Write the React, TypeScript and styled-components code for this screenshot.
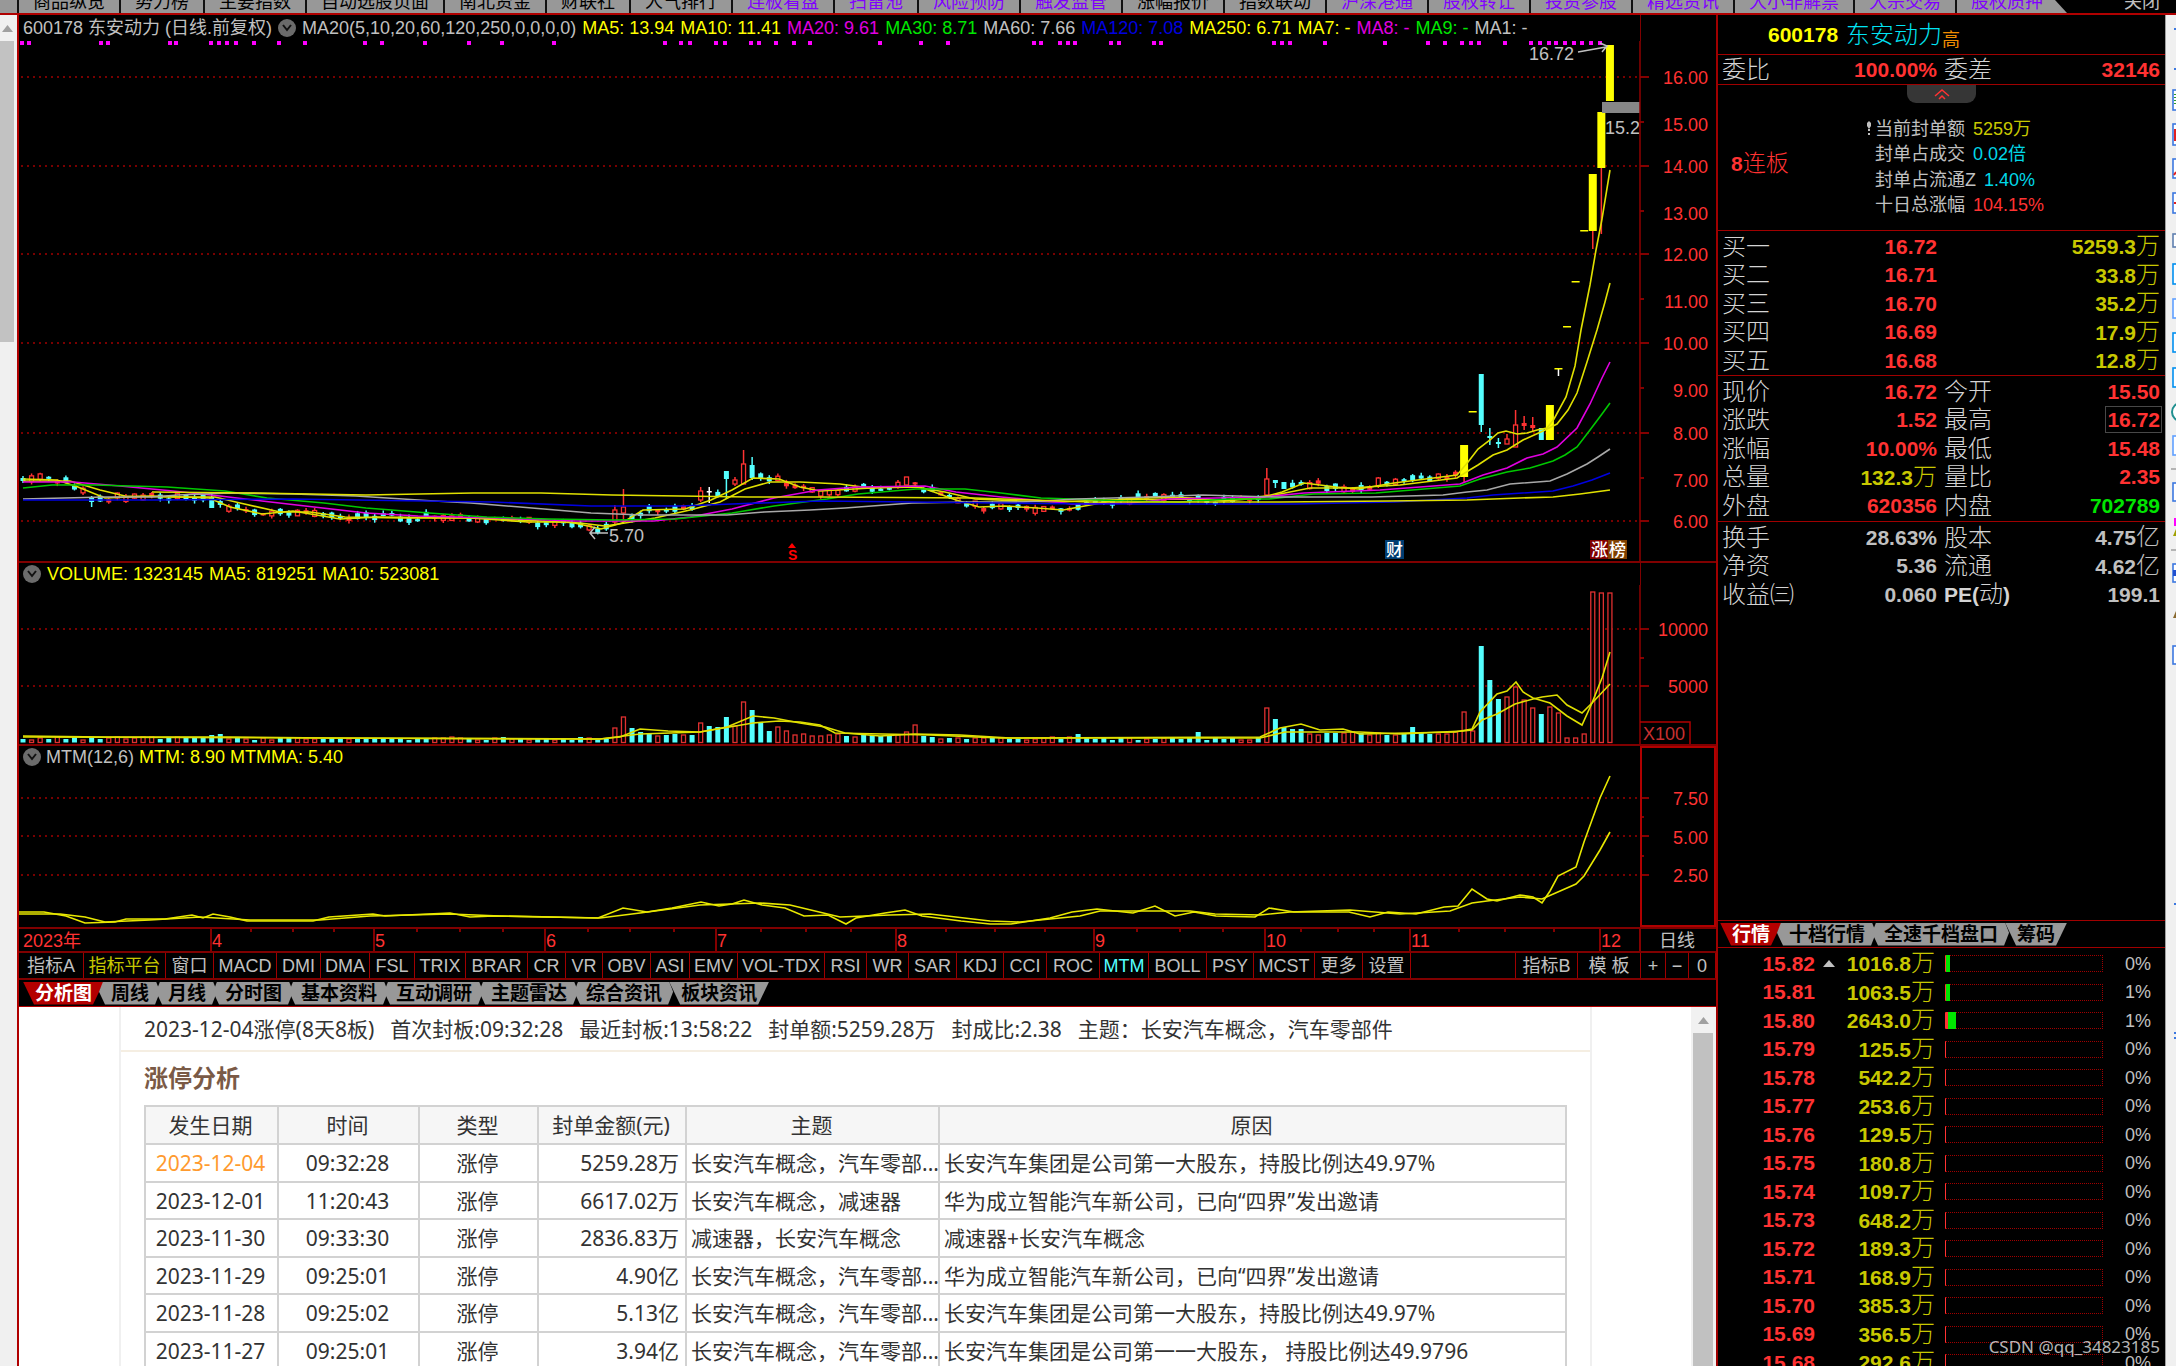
import React from 'react';
import styled, { createGlobalStyle, css } from 'styled-components';

const RED = '#ff3232';
const LINE = '#a00000';
const DARK = '#800000';
const YEL = '#ffff00';
const GOLD = '#c8c800';
const CYAN = '#54ffff';
const GREY = '#c0c0c0';

const Global = createGlobalStyle`
  * { box-sizing: border-box; }
  body { margin: 0; background: #000; overflow: hidden; }
  button { font: inherit; color: inherit; background: none; border: 0; padding: 0; margin: 0; }
  table { border-collapse: collapse; }
`;

const Page = styled.div`
  height: 100vh;
  display: flex;
  flex-direction: column;
  overflow: hidden;
  background: #000;
  color: ${GREY};
  font: 400 18px/22px 'Liberation Sans', 'Noto Sans CJK SC', sans-serif;
  white-space: nowrap;
`;

/* ---------- top tab strip ---------- */
const TopBar = styled.nav`
  flex: none;
  height: 15px;
  display: flex;
  align-items: stretch;
  border-bottom: 2px solid #b00000;
  overflow: hidden;
`;
const TopLead = styled.div`
  width: 17px;
  background: #989898;
`;
const TopTab = styled.button<{ $link?: boolean; $last?: boolean }>`
  display: flex;
  align-items: flex-end;
  padding: 0 14px;
  border-left: 2px solid #111;
  background: #989898;
  color: ${p => (p.$link ? '#8000ff' : '#000')};
  overflow: hidden;
  ${p => p.$last && css`
    padding-right: 24px;
    clip-path: polygon(0 0, calc(100% - 12px) 0, 100% 100%, 0 100%);
  `}
`;
const TopClose = styled.button`
  display: flex;
  align-items: flex-end;
  margin-left: auto;
  padding: 0 16px 0 0;
`;

/* ---------- frame ---------- */
const Body = styled.div`
  flex: 1;
  min-height: 0;
  display: flex;
`;
const LeftScroll = styled.div`
  flex: none;
  width: 17px;
  background: #f0f0f0;
  padding-right: 3px;
`;
const ScrollArrow = styled.div<{ $h: number }>`
  height: ${p => p.$h}px;
  display: flex;
  align-items: center;
  justify-content: center;
`;
const LeftThumb = styled.div`
  height: 301px;
  background: #c2c2c2;
`;
const Main = styled.main`
  flex: 1;
  min-width: 0;
  display: flex;
  flex-direction: column;
  border-left: 2px solid #b00000;
`;
const Side = styled.aside`
  flex: none;
  width: 449px;
  display: flex;
  flex-direction: column;
  border-left: 2px solid ${LINE};
`;
const IconStrip = styled.div`
  flex: none;
  width: 11px;
  background: #f0f0f0;
  border-left: 1px solid #a0a0a0;
`;

/* ---------- charts ---------- */
const Pane = styled.section`
  flex: none;
  border-bottom: 2px solid ${DARK};
`;
const PaneHead = styled.header<{ $h: number }>`
  height: ${p => p.$h}px;
  display: flex;
`;
const PaneTitle = styled.div<{ $gap: number }>`
  flex: 1;
  display: flex;
  align-items: center;
  gap: ${p => p.$gap}px;
  padding-left: 4px;
  color: ${GREY};
`;
const AxisTop = styled.div<{ $boxed?: boolean }>`
  width: 76px;
  border-left: 1px solid ${DARK};
  ${p => p.$boxed && css`border: solid #b00000; border-width: 2px 2px 0 2px;`}
`;
const Tone = styled.span<{ $c: string }>`
  color: ${p => p.$c};
`;
const RoundBtn = styled.button`
  width: 18px;
  height: 18px;
  border-radius: 50%;
  background: #6b6b6b;
  display: flex;
  align-items: center;
  justify-content: center;
`;
const Chart = styled.svg`
  display: block;
  width: 100%;
`;

const TimeRow = styled.div`
  flex: none;
  height: 24px;
  border-bottom: 2px solid ${DARK};
`;

const IndicatorBar = styled.div`
  flex: none;
  height: 27px;
  display: flex;
  border-bottom: 2px solid ${DARK};
`;
const Indicator = styled.button<{ $w: number; $c?: string }>`
  width: ${p => p.$w}px;
  text-align: center;
  border-right: 1px solid ${LINE};
  color: ${p => p.$c || GREY};
`;
const Filler = styled.div`
  flex: 1;
  border-right: 1px solid ${LINE};
`;

const TabBar = styled.div<{ $top?: boolean }>`
  flex: none;
  height: ${p => (p.$top ? 28 : 27)}px;
  display: flex;
  align-items: center;
  padding-left: ${p => (p.$top ? 2 : 4)}px;
  border-bottom: 1px solid ${p => (p.$top ? LINE : '#b00000')};
  border-top: ${p => (p.$top ? `1px solid ${LINE}` : '0')};
`;
const Tab = styled.button<{ $on?: boolean }>`
  height: 23px;
  padding: 0 12px;
  margin-right: -5px;
  font: bold 19px/23px 'Liberation Sans', 'Noto Sans CJK SC', sans-serif;
  background: ${p => (p.$on ? '#b40000' : '#989898')};
  color: ${p => (p.$on ? '#fff' : '#000')};
  clip-path: ${p => (p.$on
    ? 'polygon(0 0, 100% 0, calc(100% - 11px) 100%, 11px 100%)'
    : 'polygon(4px 0, calc(100% - 5px) 0, calc(100% - 1px) 45%, calc(100% - 6px) 100%, 6px 100%, 0 45%)')};
  &:last-child { clip-path: polygon(0 0, 100% 0, calc(100% - 11px) 100%, 11px 100%); }
`;

/* ---------- analysis document ---------- */
const Doc = styled.div`
  flex: 1;
  min-height: 0;
  display: flex;
  background: #fff;
  color: #333;
  font: 400 21px/30px 'Noto Sans', 'Noto Sans CJK SC', sans-serif;
  overflow: hidden;
`;
const DocCard = styled.article`
  flex: 1;
  min-width: 0;
  margin: 0 99px 0 100px;
  border: solid #f0f0f0;
  border-width: 0 2px;
`;
const DocLead = styled.p`
  margin: 0;
  padding: 7px 23px 6px;
  display: flex;
  gap: 16px;
  border-bottom: 2px solid #f5eee2;
`;
const DocTitle = styled.h2`
  margin: 10px 23px 11px;
  font-size: 24px;
  line-height: 32px;
  font-weight: bold;
  color: #7a5a46;
`;
const DocTable = styled.table`
  width: calc(100% - 46px);
  margin: 0 23px;
  table-layout: fixed;
  th, td {
    border: 2px solid #d2d2d2;
    height: 38px;
    padding: 0 6px 0 4px;
    font-weight: 400;
    text-align: center;
    overflow: hidden;
  }
  th { background: #f6f6f6; }
  tr:nth-child(even) td { height: 37px; }
`;
const Td = styled.td<{ $a?: string; $hot?: boolean }>`
  &&& {
    text-align: ${p => p.$a || 'center'};
    ${p => p.$a === 'left' && css`padding-right: 0;`}
  }
  color: ${p => (p.$hot ? '#ff9a2e' : 'inherit')};
`;
const DocScroll = styled.div`
  flex: none;
  width: 25px;
  background: #f1f1f1;
  display: flex;
  flex-direction: column;
`;
const DocThumb = styled.div`
  flex: 1;
  margin: 0 3px 0 2px;
  background: #c1c1c1;
`;

/* ---------- quote column ---------- */
const StockHead = styled.header`
  flex: none;
  height: 40px;
  display: flex;
  align-items: center;
  padding-left: 50px;
  border-bottom: 1px solid ${LINE};
`;
const Code = styled.span`
  font: bold 21px/30px 'Liberation Sans', sans-serif;
  color: ${YEL};
  margin-right: 8px;
`;
const Name = styled.span`
  font-size: 24px;
  line-height: 30px;
  font-weight: 300;
  color: #00e4f4;
`;
const Mark = styled.span`
  color: #f08c00;
  padding-top: 10px;
`;
const Section = styled.section<{ $h: number; $pad: number; $line?: boolean }>`
  flex: none;
  height: ${p => p.$h}px;
  padding-top: ${p => p.$pad}px;
  border-bottom: ${p => (p.$line ? `1px solid ${LINE}` : '0')};
`;
const QuoteTable = styled.table`
  width: 100%;
  table-layout: fixed;
  tr { height: 28px; }
  tr:nth-child(odd) { height: 29px; }
  th, td { padding: 0; line-height: 26px; }
  th { width: 78px; padding-left: 4px; text-align: left; font-weight: 300; font-size: 24px; color: #d4d4d4; }
  th + td { width: 141px; }
  td + th { width: 86px; padding-left: 7px; }
  td:last-child { width: auto; }
`;
const Val = styled.td<{ $c: string; $last?: boolean }>`
  text-align: right;
  color: ${p => p.$c};
  font-size: 21px;
  font-weight: bold;
  ${p => p.$last && css`&& { padding-right: 5px; }`}
`;
const Unit = styled.span`
  font-size: 24px;
  font-weight: 300;
`;
const Boxed = styled.span`
  outline: 1px solid #484848;
  outline-offset: 1px;
`;
const Strong = styled.b`
  font-size: 21px;
  font-weight: bold;
`;
const Seal = styled.section`
  flex: none;
  height: 146px;
  display: grid;
  grid-template-columns: 148px 1fr;
  grid-template-rows: 18px 1fr;
  border-bottom: 1px solid ${LINE};
`;
const Fold = styled.button`
  grid-column: 1 / 3;
  justify-self: center;
  width: 69px;
  background: #363636;
  border-radius: 0 0 9px 9px;
  display: flex;
  align-items: center;
  justify-content: center;
`;
const Streak = styled.div`
  padding: 45px 0 0 13px;
  font-size: 23px;
  line-height: 30px;
  font-weight: 300;
  color: ${RED};
`;
const SealList = styled.ul`
  list-style: none;
  margin: 0;
  padding: 13px 0 0;
`;
const SealItem = styled.li`
  display: flex;
  align-items: center;
  height: 25px;
  gap: 8px;
  &:nth-child(even) { height: 26px; }
`;
const SealLabel = styled.span`
  display: flex;
  align-items: center;
`;
const Pin = styled.span`
  width: 9px;
  display: flex;
`;

const OrderBox = styled.div`
  flex: 1;
  min-height: 0;
  overflow: hidden;
`;
const OrderTable = styled.table`
  width: 100%;
  table-layout: fixed;
  margin-top: 1px;
  tr { height: 28px; }
  tr:nth-child(odd) { height: 29px; }
  td { padding: 0; line-height: 26px; }
`;
const Price = styled.td`
  width: 97px;
  text-align: right;
  color: ${RED};
  font-size: 21px;
  font-weight: bold;
`;
const Flag = styled.td`
  width: 20px;
  &&& { line-height: 0; }
  text-align: right;
`;
const Amount = styled.td`
  width: 100px;
  text-align: right;
  color: ${GOLD};
  font-size: 21px;
  font-weight: bold;
`;
const BarCell = styled.td`
  &&& { padding-left: 10px; }
`;
const BarBox = styled.div`
  display: flex;
  height: 17px;
  border: 1px dotted #a00000;
  border-left: 1px solid ${RED};
`;
const BarPart = styled.div<{ $c: string }>`
  height: 17px;
  margin-top: -1px;
  background: ${p => p.$c};
`;
const Pct = styled.td`
  width: 62px;
  text-align: right;
  &&& { padding-right: 14px; }
`;
const Watermark = styled.div`
  position: absolute;
  right: 16px;
  bottom: 8px;
  color: rgba(235, 235, 235, 0.78);
  font: 400 17px/22px 'Noto Sans', sans-serif;
`;

/* ---------- chart data ---------- */
type Pt = [number, number];
const N = 186;
const X = (i: number) => 23 + i * 8.578;
const at = (pts: Pt[], x: number) => {
  for (let i = 1; i < pts.length; i++) {
    if (x <= pts[i][0]) {
      const [a, b] = [pts[i - 1], pts[i]];
      return a[1] + ((b[1] - a[1]) * (x - a[0])) / (b[0] - a[0]);
    }
  }
  return pts[pts.length - 1][1];
};
const noise = (i: number) => {
  const s = Math.sin(i * 127.1 + 11.7) * 43758.5453;
  return s - Math.floor(s);
};
const join = (pts: Pt[]) => pts.map(p => p.join(',')).join(' ');

const ma5: Pt[] = [[23,479],[57,480],[78,487],[105,498],[152,496],[209,498],[230,507],[262,514],[293,511],[340,519],[377,517],[471,518],[528,522],[570,522],[601,529],[622,523],[643,510],[685,509],[711,500],[732,490],[753,478],[779,479],[800,487],[820,491],[854,489],[889,487],[916,486],[934,492],[956,500],[979,507],[1005,506],[1037,508],[1063,510],[1090,505],[1121,499],[1166,497],[1193,498],[1224,501],[1260,498],[1282,492],[1304,483],[1336,487],[1358,489],[1394,483],[1457,475],[1468,462],[1478,449],[1490,440],[1498,433],[1506,431],[1517,434],[1527,433],[1537,430],[1547,428],[1554,419],[1566,397],[1575,366],[1581,330],[1590,285],[1596,250],[1602,219],[1610,170]];
const ma10: Pt[] = [[23,481],[70,481],[100,490],[125,496],[170,497],[215,497],[240,503],[280,512],[310,512],[345,517],[400,518],[480,518],[540,521],[580,523],[605,526],[625,523],[655,518],[690,510],[720,502],[745,489],[770,482],[800,482],[840,484],[870,488],[916,487],[945,492],[975,499],[1020,501],[1060,502],[1100,500],[1170,499],[1230,500],[1275,495],[1310,488],[1350,488],[1400,485],[1457,478],[1468,471],[1478,465],[1493,455],[1507,450],[1523,440],[1543,431],[1557,424],[1568,410],[1577,393],[1587,362],[1597,330],[1605,302],[1610,283]];
const ma20: Pt[] = [[23,482],[73,482],[120,486],[173,491],[220,496],[262,501],[314,507],[366,513],[418,516],[497,518],[575,521],[654,521],[690,517],[732,509],[774,498],[818,490],[858,487],[925,486],[956,492],[1001,497],[1045,501],[1072,504],[1130,503],[1170,499],[1264,497],[1304,493],[1380,490],[1460,484],[1483,475],[1507,468],[1527,458],[1543,454],[1557,447],[1577,428],[1590,404],[1602,378],[1610,362]];
const ma30: Pt[] = [[23,488],[52,485],[94,485],[167,487],[225,491],[267,498],[324,503],[366,508],[429,513],[486,517],[549,519],[612,520],[675,519],[732,513],[774,506],[827,499],[858,494],[916,489],[965,489],[1001,493],[1041,498],[1072,499],[1126,501],[1179,502],[1229,499],[1269,499],[1313,494],[1376,493],[1460,486],[1480,479],[1507,472],[1530,468],[1553,461],[1565,455],[1577,447],[1590,430],[1602,414],[1610,403]];
const ma60: Pt[] = [[23,499],[105,497],[152,497],[178,495],[230,493],[293,494],[356,496],[434,501],[471,503],[544,509],[591,513],[643,515],[727,515],[764,512],[810,510],[845,508],[912,503],[970,502],[1023,502],[1077,499],[1148,497],[1202,495],[1273,497],[1371,497],[1443,495],[1467,492],[1487,490],[1510,484],[1550,481],[1567,474],[1587,464],[1598,457],[1610,449]];
const ma120: Pt[] = [[23,500],[157,500],[293,499],[356,500],[492,502],[591,506],[680,506],[732,504],[820,501],[912,502],[1090,504],[1295,504],[1394,502],[1467,498],[1493,495],[1553,491],[1573,486],[1592,480],[1610,473]];
const ma250: Pt[] = [[152,492],[251,493],[366,495],[473,493],[541,493],[612,495],[748,497],[820,497],[974,498],[1032,500],[1090,502],[1280,502],[1389,501],[1467,500],[1520,498],[1553,497],[1580,494],[1610,490]];

type Candle = { c: string; hi: number; t: number; b: number; lo: number; fill: boolean; w: number };
const special: Record<number, Partial<Candle>> = {
  0: { c: CYAN, hi: 476, t: 478, b: 481, lo: 483, fill: true },
  8: { c: CYAN, hi: 496, t: 498, b: 502, lo: 507, fill: true },
  22: { c: CYAN, hi: 493, t: 497, b: 508, lo: 508, fill: true },
  69: { c: RED, hi: 505, t: 510, b: 522, lo: 524, fill: false },
  70: { c: RED, hi: 489, t: 507, b: 513, lo: 522, fill: false },
  79: { c: RED, hi: 487, t: 491, b: 500, lo: 502, fill: false },
  80: { c: '#fff', hi: 487, t: 491, b: 492, lo: 503, fill: true },
  82: { c: CYAN, hi: 471, t: 471, b: 479, lo: 499, fill: true },
  83: { c: RED, hi: 477, t: 480, b: 484, lo: 486, fill: false },
  84: { c: RED, hi: 450, t: 464, b: 484, lo: 484, fill: false },
  85: { c: CYAN, hi: 457, t: 465, b: 478, lo: 480, fill: true },
  103: { c: RED, hi: 477, t: 477, b: 485, lo: 485, fill: false },
  145: { c: RED, hi: 468, t: 479, b: 495, lo: 496, fill: false },
  146: { c: CYAN, hi: 480, t: 480, b: 483, lo: 488, fill: true },
  147: { c: CYAN, hi: 482, t: 482, b: 489, lo: 489, fill: true },
  158: { c: RED, hi: 477, t: 478, b: 486, lo: 488, fill: false },
  168: { c: YEL, hi: 445, t: 445, b: 477, lo: 482, fill: true, w: 8 },
  169: { c: YEL, hi: 411, t: 411, b: 412, lo: 412, fill: true, w: 8 },
  170: { c: CYAN, hi: 374, t: 374, b: 425, lo: 432, fill: true },
  171: { c: CYAN, hi: 428, t: 436, b: 438, lo: 445, fill: true },
  172: { c: CYAN, hi: 438, t: 442, b: 444, lo: 448, fill: true },
  173: { c: RED, hi: 434, t: 439, b: 444, lo: 444, fill: false },
  174: { c: RED, hi: 410, t: 425, b: 447, lo: 447, fill: false },
  175: { c: RED, hi: 416, t: 423, b: 426, lo: 430, fill: true },
  176: { c: RED, hi: 417, t: 425, b: 428, lo: 432, fill: true },
  177: { c: CYAN, hi: 428, t: 428, b: 440, lo: 440, fill: true },
  178: { c: YEL, hi: 405, t: 405, b: 440, lo: 440, fill: true, w: 8 },
  179: { c: YEL, hi: 368, t: 368, b: 369, lo: 376, fill: true, w: 8 },
  180: { c: YEL, hi: 326, t: 326, b: 327, lo: 327, fill: true, w: 8 },
  181: { c: YEL, hi: 281, t: 281, b: 282, lo: 282, fill: true, w: 8 },
  182: { c: YEL, hi: 230, t: 230, b: 231, lo: 231, fill: true, w: 8 },
  183: { c: YEL, hi: 174, t: 174, b: 231, lo: 249, fill: true, w: 8 },
  184: { c: YEL, hi: 112, t: 112, b: 168, lo: 234, fill: true, w: 8 },
  185: { c: YEL, hi: 45, t: 45, b: 101, lo: 101, fill: true, w: 8 },
};
const candles: Candle[] = Array.from({ length: N }, (_, i) => {
  const up = noise(i) > 0.52;
  const mid = at(ma5, X(i)) + (noise(i + 300) - 0.5) * 6;
  const h = 2 + noise(i + 600) * 4;
  return {
    c: up ? RED : CYAN, t: mid - h / 2, b: mid + h / 2,
    hi: mid - h / 2 - noise(i + 900) * 3, lo: mid + h / 2 + noise(i + 1200) * 3,
    fill: !up || h < 4, w: 5, ...special[i],
  };
});

const volTop: Record<number, number> = {
  22: 735, 23: 734, 69: 728, 70: 717, 71: 728, 72: 732, 73: 733, 79: 723, 80: 726, 81: 727, 82: 717, 83: 726, 84: 702, 85: 710,
  86: 723, 87: 731, 88: 727, 89: 731, 103: 732, 104: 725, 123: 734, 137: 732, 145: 708, 146: 719, 147: 727, 148: 729, 149: 729, 158: 733, 162: 727,
  168: 712, 169: 731, 170: 646, 171: 680, 172: 699, 173: 697, 174: 687, 175: 700, 176: 708, 177: 714, 178: 707,
  179: 713, 180: 738, 181: 738, 182: 734, 183: 592, 184: 593, 185: 593,
};
const volBase = (i: number) => {
  if (i < 69) return 738;
  if (i < 106) return 735;
  if (i < 145) return 738;
  return 733;
};
const vma5: Pt[] = [[23,736],[105,737],[230,737],[330,738],[600,739],[620,737],[640,729],[668,731],[700,732],[727,727],[753,716],[774,718],[800,723],[825,727],[845,733],[880,736],[915,734],[960,735],[1010,738],[1260,737],[1280,728],[1301,724],[1320,730],[1343,729],[1360,734],[1455,732],[1472,729],[1480,712],[1497,694],[1507,691],[1516,682],[1523,692],[1533,698],[1550,703],[1567,716],[1582,725],[1592,703],[1602,678],[1610,652]];
const vma10: Pt[] = [[23,737],[600,739],[640,734],[700,732],[753,723],[779,721],[800,722],[820,725],[835,733],[930,735],[1000,738],[1260,738],[1285,732],[1360,732],[1400,734],[1463,731],[1472,730],[1482,720],[1497,714],[1515,704],[1533,699],[1542,697],[1557,695],[1567,705],[1582,713],[1593,702],[1610,684]];
const mtm: Pt[] = [[19,912],[44,912],[66,916],[85,923],[115,922],[126,919],[165,919],[192,915],[203,918],[213,914],[230,917],[247,921],[313,921],[329,917],[373,914],[385,916],[450,913],[470,917],[494,916],[598,918],[623,908],[647,912],[672,908],[701,902],[719,906],[732,904],[744,900],[762,905],[785,908],[804,916],[828,915],[846,924],[856,918],[885,913],[905,910],[922,916],[961,921],[990,924],[1011,924],[1050,918],[1072,912],[1097,909],[1133,913],[1155,906],[1175,916],[1194,912],[1216,916],[1255,917],[1269,908],[1294,912],[1349,912],[1370,917],[1388,912],[1416,914],[1444,907],[1458,906],[1472,889],[1487,899],[1497,901],[1520,895],[1533,897],[1542,903],[1550,891],[1558,876],[1576,867],[1584,842],[1600,798],[1610,776]];
const mtmma: Pt[] = [[19,914],[60,914],[85,917],[105,922],[150,920],[200,917],[250,920],[320,920],[370,916],[450,914],[500,916],[600,918],[640,913],[700,905],[760,903],[790,905],[840,917],[890,915],[930,914],[990,921],[1020,922],[1080,916],[1100,911],[1190,911],[1215,914],[1260,915],[1290,912],[1350,910],[1400,914],[1450,911],[1472,903],[1487,901],[1520,897],[1542,899],[1576,884],[1584,876],[1600,850],[1610,832]];

const dots = [22,29,101,108,170,176,211,219,227,236,254,279,305,365,382,425,469,502,554,665,681,690,716,725,751,759,776,794,810,880,921,948,1034,1041,1060,1068,1075,1111,1119,1154,1161,1274,1282,1290,1325,1385,1428,1445,1462,1471,1479,1505,1531,1540,1549,1556,1565,1574,1582,1591,1600];
const priceTicks: [string, number, number][] = [['16.00',77,77],['15.00',122,124],['14.00',166,166],['13.00',211,213],['12.00',254,254],['11.00',299,301],['10.00',343,343],['9.00',388,390],['8.00',433,433],['7.00',478,480],['6.00',521,521]];

const Label = ({ x, y, c = RED, end, children }: { x: number; y: number; c?: string; end?: boolean; children: React.ReactNode }) => (
  <text x={x} y={y + 7} fill={c} fontSize="18" textAnchor={end ? 'end' : 'start'}>{children}</text>
);
const Dotted = ({ y }: { y: number }) => (
  <line x1="21" x2="1640" y1={y} y2={y} stroke="#a00000" strokeWidth="1.5" strokeDasharray="2 4" />
);
const Curve = ({ pts, c }: { pts: Pt[]; c: string }) => (
  <polyline points={join(pts)} fill="none" stroke={c} strokeWidth="1.6" />
);
const Chip = ({ x, bg, t }: { x: number; bg: string; t: string }) => (
  <g>
    <rect x={x} y="540" width="19" height="19" fill={bg} />
    <text x={x + 1} y="556" fontSize="17" fontWeight="500" fill="#fff">{t}</text>
  </g>
);

const PriceChart = () => (
  <Chart viewBox="19 41 1697 520" height="520" preserveAspectRatio="none" role="img" aria-label="日线">
    {dots.map(x => <rect key={x} x={x - 2} y="41" width="4" height="4" fill="#ff00ff" />)}
    {priceTicks.map(([t, y, ly], i) => (
      <g key={t}>
        {i % 2 === 0 && <Dotted y={y} />}
        <line x1="1640" x2={i % 2 ? 1644 : 1649} y1={y} y2={y} stroke="#b00000" strokeWidth="1.5" />
        <Label x={1708} y={ly} end>{t}</Label>
      </g>
    ))}
    {candles.map((k, i) => {
      const x = X(i);
      return (
        <g key={i}>
          <line x1={x} x2={x} y1={k.hi} y2={k.lo} stroke={k.w === 8 ? (i === 179 ? '#fff' : RED) : k.c} strokeWidth="1.5" />
          <rect x={x - k.w / 2 + (k.fill ? 0 : 0.5)} y={k.t} width={k.w - (k.fill ? 0 : 1)} height={Math.max(1.5, k.b - k.t)}
            fill={k.fill ? k.c : '#000'} stroke={k.fill ? 'none' : k.c} strokeWidth="1.3" />
        </g>
      );
    })}
    <Curve pts={ma5} c="#e0e000" />
    <Curve pts={ma10} c="#e0e000" />
    <Curve pts={ma20} c="#e000e0" />
    <Curve pts={ma30} c="#00c800" />
    <Curve pts={ma60} c="#a8a8a8" />
    <Curve pts={ma120} c="#0000e0" />
    <Curve pts={ma250} c="#e0e000" />
    <rect x="1602" y="102" width="38" height="11" fill="#868686" />
    <Label x={1605} y={127} c={GREY}>15.2</Label>
    <Label x={1529} y={53} c={GREY}>16.72</Label>
    <path d="M1578 52 L1606 47 M1600 43 L1607 46 L1602 52" fill="none" stroke={GREY} strokeWidth="1.5" />
    <Label x={609} y={535} c={GREY}>5.70</Label>
    <path d="M608 533 H590 M595 527 L590 533 L595 539" fill="none" stroke={GREY} strokeWidth="1.5" />
    <path d="M792 543 l4 5 h-8 z" fill="#f00" />
    <text x="788" y="560" fontSize="14" fontWeight="bold" fill="#f00">S</text>
    <Chip x={1385} bg="#003c70" t="财" />
    <Chip x={1590} bg="#800000" t="涨" />
    <Chip x={1608} bg="#7f4000" t="榜" />
    <line x1="1640" x2="1640" y1="41" y2="561" stroke="#900000" strokeWidth="1.5" />
  </Chart>
);

const VolumeChart = () => (
  <Chart viewBox="19 585 1697 159" height="159" preserveAspectRatio="none" role="img" aria-label="VOLUME">
    {[629, 686].map(y => <Dotted key={y} y={y} />)}
    {candles.map((k, i) => {
      const up = i > 177 || ((k.c === RED || k.c === YEL));
      const top = volTop[i] ?? volBase(i) + Math.round(noise(i + 50) * 3 - 1);
      return <rect key={i} x={X(i) - 2.5 + (up ? 0.5 : 0)} y={top} width={up ? 4 : 5} height={742.5 - top}
        fill={up ? '#000' : CYAN} stroke={up ? '#e03030' : 'none'} strokeWidth="1.3" />;
    })}
    <Curve pts={vma5} c="#e0e000" />
    <Curve pts={vma10} c="#e0e000" />
    <line x1="1640" x2="1640" y1="585" y2="744" stroke="#900000" strokeWidth="1.5" />
    <path d="M1640 629 h9 M1640 686 h9 M1640 658 h4 M1640 722 H1690 V744" fill="none" stroke="#b00000" strokeWidth="1.5" />
    <Label x={1708} y={629} end>10000</Label>
    <Label x={1708} y={686} end>5000</Label>
    <Label x={1643} y={733} c="#c83030">X100</Label>
  </Chart>
);

const MtmChart = () => (
  <Chart viewBox="19 768 1697 159" height="159" preserveAspectRatio="none" role="img" aria-label="MTM">
    {[798, 836, 875].map(y => <Dotted key={y} y={y} />)}
    <Curve pts={mtm} c="#e8e800" />
    <Curve pts={mtmma} c="#e8e800" />
    <path d="M1641 768 V926 H1715 V768" fill="none" stroke="#b00000" strokeWidth="2" />
    <path d="M1641 798 h8 M1641 836 h8 M1641 875 h8 M1641 817 h3 M1641 856 h3" stroke="#b00000" strokeWidth="1.5" />
    <Label x={1708} y={798} end>7.50</Label>
    <Label x={1708} y={837} end>5.00</Label>
    <Label x={1708} y={875} end>2.50</Label>
  </Chart>
);

const months: [string, number][] = [['4',211],['5',374],['6',545],['7',716],['8',896],['9',1094],['10',1265],['11',1410],['12',1600]];
const weeks = [251,293,334,417,460,503,588,630,674,761,806,851,946,995,1045,1137,1180,1223,1301,1338,1374,1459,1505,1554];
const TimeAxis = () => (
  <Chart viewBox="19 929 1697 22" height="22" preserveAspectRatio="none" role="img" aria-label="2023年">
    <Label x={23} y={940}>2023年</Label>
    {months.map(([m, x]) => (
      <g key={m}>
        <line x1={x} x2={x} y1="929" y2="951" stroke="#b00000" strokeWidth="1.5" />
        <Label x={x + 1} y={940}>{m}</Label>
      </g>
    ))}
    {weeks.map(x => <line key={x} x1={x} x2={x} y1="929" y2="932" stroke="#b00000" strokeWidth="1.5" />)}
    <line x1="1640" x2="1640" y1="929" y2="951" stroke="#b00000" strokeWidth="1.5" />
    <Label x={1659} y={940} c={GREY}>日线</Label>
  </Chart>
);

/* ---------- texts ---------- */
const topTabs: [string, boolean][] = [['商品纵览',false],['势力榜',false],['主要指数',false],['自动选股页面',false],['南北资金',false],['财联社',false],['人气排行',false],['连板看盘',true],['扫雷池',true],['风险预防',true],['触发监管',true],['涨幅报价',false],['指数联动',false],['沪深港通',true],['股权转让',true],['投资参股',true],['精选资讯',true],['大小非解禁',true],['大宗交易',true],['股权质押',true]];
const maTexts: [string, string][] = [['MA5: 13.94',YEL],['MA10: 11.41',YEL],['MA20: 9.61','#e000e0'],['MA30: 8.71','#00e600'],['MA60: 7.66',GREY],['MA120: 7.08','#0000e0'],['MA250: 6.71',YEL],['MA7: -',YEL],['MA8: -','#e000e0'],['MA9: -','#00e600'],['MA1: -',GREY]];
const indicators: [string, number, string?][] = [['指标A',65],['指标平台',82,GOLD],['窗口',48],['MACD',63],['DMI',44],['DMA',49],['FSL',45],['TRIX',51],['BRAR',62],['CR',38],['VR',37],['OBV',48],['ASI',39],['EMV',48],['VOL-TDX',87],['RSI',42],['WR',42],['SAR',48],['KDJ',47],['CCI',43],['ROC',53],['MTM',49,CYAN],['BOLL',58],['PSY',47],['MCST',61],['更多',48],['设置',48]];
const indicatorsRight: [string, number][] = [['指标B',62],['模 板',63],['+',25],['−',23],['0',27]];
const docTabs = ['分析图','周线','月线','分时图','基本资料','互动调研','主题雷达','综合资讯','板块资讯'];
const G1 = '长安汽车集团是公司第一大股东，持股比例达49.97%';
const G2 = '华为成立智能汽车新公司，已向“四界”发出邀请';
const T1 = '长安汽车概念，汽车零部...';
const rows = [
  ['2023-12-04','09:32:28','5259.28万',T1,G1],
  ['2023-12-01','11:20:43','6617.02万','长安汽车概念，减速器',G2],
  ['2023-11-30','09:33:30','2836.83万','减速器，长安汽车概念','减速器+长安汽车概念'],
  ['2023-11-29','09:25:01','4.90亿',T1,G2],
  ['2023-11-28','09:25:02','5.13亿',T1,G1],
  ['2023-11-27','09:25:01','3.94亿',T1,'长安汽车集团是公司第一一大股东， 持股比例达49.9796'],
];
type Q = [string, string, string, string, string, string];
const bids: Q[] = [['买一','16.72',RED,'','5259.3万',GOLD],['买二','16.71',RED,'','33.8万',GOLD],['买三','16.70',RED,'','35.2万',GOLD],['买四','16.69',RED,'','17.9万',GOLD],['买五','16.68',RED,'','12.8万',GOLD]];
const quotes: Q[] = [['现价','16.72',RED,'今开','15.50',RED],['涨跌','1.52',RED,'最高','16.72',RED],['涨幅','10.00%',RED,'最低','15.48',RED],['总量','132.3万',GOLD,'量比','2.35',RED],['外盘','620356',RED,'内盘','702789','#00e600']];
const basics: Q[] = [['换手','28.63%',GREY,'股本','4.75亿',GREY],['净资','5.36',GREY,'流通','4.62亿',GREY],['收益㈢','0.060',GREY,'PE(动)','199.1',GREY]];
const orders: [string, string, string, number, number][] = [['15.82','1016.8','0%',0,4],['15.81','1063.5','1%',0,4],['15.80','2643.0','1%',2,8],['15.79','125.5','0%',0,0],['15.78','542.2','0%',0,0],['15.77','253.6','0%',0,0],['15.76','129.5','0%',0,0],['15.75','180.8','0%',0,0],['15.74','109.7','0%',0,0],['15.73','648.2','0%',0,0],['15.72','189.3','0%',0,0],['15.71','168.9','0%',0,0],['15.70','385.3','0%',0,0],['15.69','356.5','0%',0,0],['15.68','292.6','0%',0,0]];

const Num = ({ t }: { t: string }) => {
  const m = t.match(/^([\d.%]+)([万亿]?)$/);
  return m ? <>{m[1]}{m[2] && <Unit>{m[2]}</Unit>}</> : <>{t}</>;
};
const Quotes = ({ data }: { data: Q[] }) => (
  <QuoteTable>
    <tbody>
      {data.map(([a, v, c, b, w, d]) => (
        <tr key={a}>
          <th scope="row">{a}</th>
          <Val $c={c}><Num t={v} /></Val>
          <th scope="row">{b === 'PE(动)' ? <><Strong>PE(</Strong>动<Strong>)</Strong></> : b}</th>
          <Val $c={d} $last>{b === '最高' ? <Boxed>{w}</Boxed> : <Num t={w} />}</Val>
        </tr>
      ))}
    </tbody>
  </QuoteTable>
);
const Chevron = () => (
  <RoundBtn aria-label="展开">
    <svg width="10" height="8" viewBox="0 0 10 8"><path d="M1 1 L5 6 L9 1" fill="none" stroke="#111" strokeWidth="2" /></svg>
  </RoundBtn>
);
const Arrow = () => (
  <svg width="11" height="7" viewBox="0 0 11 7"><path d="M0 7 L5.5 0 L11 7 Z" fill="#a0a0a0" /></svg>
);

const boxes: [number, number, string][] = [[74,22,'#3c78e0'],[108,23,'#3c78e0'],[143,21,'#3c78e0'],[177,22,'#3c78e0'],[218,15,'#6080b0'],[248,22,'#0090f0'],[283,21,'#60a0ff'],[317,21,'#0090f0'],[352,21,'#0090f0'],[420,21,'#60a0ff'],[467,20,'#3c78e0'],[548,20,'#3c78e0'],[630,20,'#3c78e0']];
const EdgeIcons = () => (
  <svg width="10" height="1351" viewBox="0 0 10 1351" display="block">
    {boxes.map(([y, h, c]) => <rect key={y} x="7" y={y + 1} width="12" height={h - 2} fill="#fff" stroke={c} strokeWidth="1.6" />)}
    <path d="M9 79 v10" stroke="#2a9a2a" strokeWidth="2" strokeDasharray="1 2" />
    <path d="M9 114 v12 M8 188 h2 M8 160 l2 -3" stroke="#e02020" strokeWidth="2" />
    <circle cx="15" cy="397" r="9" fill="#fff" stroke="#209090" strokeWidth="2" />
    <path d="M5 454 h5 M5 535 h5" stroke="#a0a0a0" strokeWidth="1.5" />
    <path d="M9 503 v8" stroke="#ff00ff" strokeWidth="2" />
    <path d="M7 521 l3 -7 v7 z" fill="#a0a000" />
    <rect x="7" y="555" width="4" height="6" fill="#2050d0" />
    <path d="M7 603 l3 -7 v7 z" fill="#8a6a30" />
    <path d="M8 14 h2 M8 54 h2 M8 889 h2 M8 1018 h2 M8 1023 h2" stroke="#3c78e0" strokeWidth="2" />
  </svg>
);

export default function App() {
  return (
    <Page>
      <Global />
      <TopBar>
        <TopLead />
        {topTabs.map(([t, link], i) => <TopTab key={t} $link={link} $last={i === topTabs.length - 1}>{t}</TopTab>)}
        <TopClose>关闭</TopClose>
      </TopBar>
      <Body>
        <LeftScroll>
          <ScrollArrow $h={26}><Arrow /></ScrollArrow>
          <LeftThumb />
        </LeftScroll>
        <Main>
          <Pane>
            <PaneHead $h={26}>
              <PaneTitle $gap={6}>
                <span>600178 东安动力 (日线.前复权)</span>
                <Chevron />
                <span>MA20(5,10,20,60,120,250,0,0,0,0)</span>
                {maTexts.map(([t, c]) => <Tone key={t} $c={c}>{t}</Tone>)}
              </PaneTitle>
              <AxisTop />
            </PaneHead>
            <PriceChart />
          </Pane>
          <Pane>
            <PaneHead $h={22}>
              <PaneTitle $gap={6}>
                <Chevron />
                <Tone $c={YEL}>VOLUME: 1323145</Tone>
                <Tone $c={YEL}>MA5: 819251</Tone>
                <Tone $c={YEL}>MA10: 523081</Tone>
              </PaneTitle>
              <AxisTop />
            </PaneHead>
            <VolumeChart />
          </Pane>
          <Pane>
            <PaneHead $h={22}>
              <PaneTitle $gap={5}>
                <Chevron />
                <span>MTM(12,6)</span>
                <Tone $c={YEL}>MTM: 8.90</Tone>
                <Tone $c={YEL}>MTMMA: 5.40</Tone>
              </PaneTitle>
              <AxisTop $boxed />
            </PaneHead>
            <MtmChart />
          </Pane>
          <TimeRow><TimeAxis /></TimeRow>
          <IndicatorBar>
            {indicators.map(([t, w, c]) => <Indicator key={t} $w={w} $c={c}>{t}</Indicator>)}
            <Filler />
            {indicatorsRight.map(([t, w]) => <Indicator key={t} $w={w}>{t}</Indicator>)}
          </IndicatorBar>
          <TabBar>
            {docTabs.map((t, i) => <Tab key={t} $on={i === 0}>{t}</Tab>)}
          </TabBar>
          <Doc>
            <DocCard>
              <DocLead>
                <span>2023-12-04涨停(8天8板)</span>
                <span>首次封板:09:32:28</span>
                <span>最近封板:13:58:22</span>
                <span>封单额:5259.28万</span>
                <span>封成比:2.38</span>
                <span>主题：长安汽车概念，汽车零部件</span>
              </DocLead>
              <DocTitle>涨停分析</DocTitle>
              <DocTable>
                <colgroup>
                  <col width="133" /><col width="141" /><col width="119" /><col width="148" /><col width="253" /><col />
                </colgroup>
                <thead>
                  <tr><th>发生日期</th><th>时间</th><th>类型</th><th>封单金额(元)</th><th>主题</th><th>原因</th></tr>
                </thead>
                <tbody>
                  {rows.map((r, i) => (
                    <tr key={r[0]}>
                      <Td $hot={i === 0}>{r[0]}</Td>
                      <Td>{r[1]}</Td>
                      <Td>涨停</Td>
                      <Td $a="right">{r[2]}</Td>
                      <Td $a="left">{r[3]}</Td>
                      <Td $a="left">{r[4]}</Td>
                    </tr>
                  ))}
                </tbody>
              </DocTable>
            </DocCard>
            <DocScroll>
              <ScrollArrow $h={26}><Arrow /></ScrollArrow>
              <DocThumb />
            </DocScroll>
          </Doc>
        </Main>
        <Side>
          <StockHead>
            <Code>600178</Code>
            <Name>东安动力</Name>
            <Mark>高</Mark>
          </StockHead>
          <Section $h={30} $pad={0} $line>
            <Quotes data={[['委比', '100.00%', RED, '委差', '32146', RED]]} />
          </Section>
          <Seal>
            <Fold aria-label="收起">
              <svg width="16" height="11" viewBox="0 0 16 11"><path d="M1 7 L8 1 L15 7 M5 10 L8 7 L11 10" fill="none" stroke={RED} strokeWidth="1.5" /></svg>
            </Fold>
            <Streak><Strong>8</Strong>连板</Streak>
            <SealList>
              {[['当前封单额', '5259万', GOLD], ['封单占成交', '0.02倍', '#00d8e8'], ['封单占流通Z', '1.40%', '#00d8e8'], ['十日总涨幅', '104.15%', RED]].map(([a, v, c], i) => (
                <SealItem key={a}>
                  <SealLabel>
                    <Pin>{i === 0 && <svg width="6" height="15" viewBox="0 0 6 15"><path d="M3 0 L5 2 V5 L3 8 L1 5 V2 Z M2 8 h2 v2 h-2 z M2 12 h2 v2 h-2 z" fill={GREY} /></svg>}</Pin>
                    {a}
                  </SealLabel>
                  <Tone $c={c}>{v}</Tone>
                </SealItem>
              ))}
            </SealList>
          </Seal>
          <Section $h={145} $pad={1} $line><Quotes data={bids} /></Section>
          <Section $h={146} $pad={1} $line><Quotes data={quotes} /></Section>
          <Section $h={398} $pad={1}><Quotes data={basics} /></Section>
          <TabBar $top>
            {['行情', '十档行情', '全速千档盘口', '筹码'].map((t, i) => <Tab key={t} $on={i === 0}>{t}</Tab>)}
          </TabBar>
          <OrderBox>
            <OrderTable>
              <tbody>
                {orders.map(([p, v, pct, r, g], i) => (
                  <tr key={p}>
                    <Price>{p}</Price>
                    <Flag>{i === 0 && <svg width="12" height="7" viewBox="0 0 12 7"><path d="M0 7 L6 0 L12 7 Z" fill={GREY} /></svg>}</Flag>
                    <Amount>{v}<Unit>万</Unit></Amount>
                    <BarCell>
                      <BarBox>
                        <BarPart $c={RED} style={{ width: r }} />
                        <BarPart $c="#00e600" style={{ width: g }} />
                      </BarBox>
                    </BarCell>
                    <Pct>{pct}</Pct>
                  </tr>
                ))}
              </tbody>
            </OrderTable>
          </OrderBox>
        </Side>
        <IconStrip><EdgeIcons /></IconStrip>
      </Body>
      <Watermark>CSDN @qq_34823185</Watermark>
    </Page>
  );
}
